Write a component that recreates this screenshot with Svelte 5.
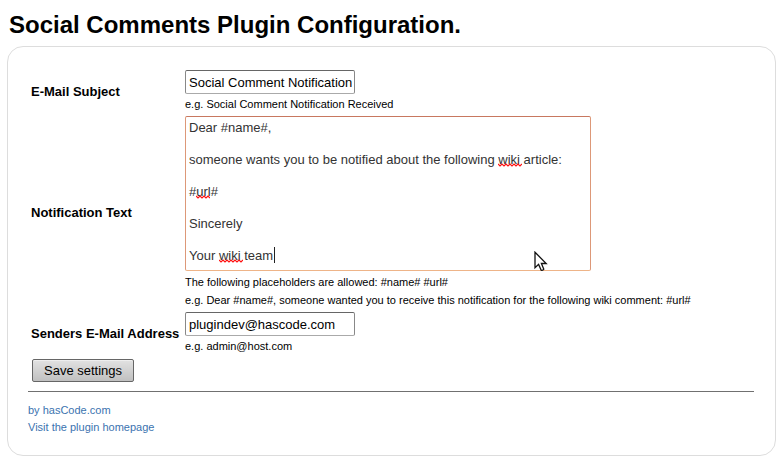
<script>
  let subject = $state('Social Comment Notification Received');
  let message = $state(
    'Dear #name#,\n\nsomeone wants you to be notified about the following wiki article:\n\n#url#\n\nSincerely\n\nYour wiki team'
  );
  let sender = $state('plugindev@hascode.com');

  // spelling marks over the message text: left, top, width
  const marks = [
    { x: 313, y: 47, w: 24 },
    { x: 11, y: 79, w: 14 },
    { x: 34, y: 143, w: 24 }
  ];

  function wave(w) {
    let d = 'M0 1';
    for (let x = 2, i = 0; x <= w; x += 2, i++) d += ` L${x} ${i % 2 ? 1 : 3}`;
    return d;
  }
</script>

<main>
  <h1>Social Comments Plugin Configuration.</h1>
  <section class="panel">
    <form onsubmit={(e) => e.preventDefault()}>
      <div class="fields">
        <label for="subject">E-Mail Subject</label>
        <div>
          <input id="subject" type="text" bind:value={subject} />
          <p class="hint">e.g. Social Comment Notification Received</p>
        </div>

        <label for="message">Notification Text</label>
        <div>
          <div class="editor">
            <textarea id="message" spellcheck="false" bind:value={message}></textarea>
            {#each marks as m}
              <svg class="mark" style="left:{m.x}px;top:{m.y}px" width={m.w} height="4" aria-hidden="true">
                <path d={wave(m.w)} fill="none" stroke="#ff1010" stroke-width="1.2" />
              </svg>
            {/each}
            <span class="caret"></span>
            <svg class="pointer" width="14" height="21" viewBox="0 0 14 21" aria-hidden="true">
              <path d="M1 1.2V16.8L4.6 13.4L7.2 19.2Q8.8 19.8 9.8 18.2L7.4 12.5H12.2Z" fill="#fff" stroke="#111" stroke-width="1.3" />
            </svg>
          </div>
          <p class="hint">The following placeholders are allowed: #name# #url#</p>
          <p class="hint">e.g. Dear #name#, someone wanted you to receive this notification for the following wiki comment: #url#</p>
        </div>

        <label for="sender">Senders E-Mail Address</label>
        <div>
          <input id="sender" type="text" bind:value={sender} />
          <p class="hint">e.g. admin@host.com</p>
        </div>
      </div>
      <button type="submit">Save settings</button>
    </form>
    <hr />
    <footer>
      <a href="#hascode">by hasCode.com</a>
      <a href="#homepage">Visit the plugin homepage</a>
    </footer>
  </section>
</main>

<style>
  :global(body) {
    margin: 0;
    background: #fff;
  }
  main {
    padding: 10px 7px;
    font-family: 'Liberation Sans', Arial, sans-serif;
    font-size: 13px;
    color: #000;
  }
  h1 {
    margin: 0 2px 6px;
    font-size: 24px;
    line-height: 30px;
  }
  .panel {
    border: 1px solid #ddd;
    border-radius: 16px;
    padding: 23px 21px 19px 20px;
  }
  .fields {
    display: grid;
    grid-template-columns: 151px minmax(0, 1fr);
    column-gap: 3px;
    row-gap: 3px;
    align-items: center;
    padding-left: 3px;
  }
  label {
    font-weight: bold;
    white-space: nowrap;
  }
  input,
  textarea {
    display: block;
    box-sizing: border-box;
    margin: 0;
    border: 1px solid #999;
    border-radius: 2px;
    background: #fff;
    font-family: inherit;
    font-size: 13px;
    outline: none;
  }
  input {
    width: 170px;
    height: 24px;
    margin-bottom: 1px;
    padding: 1px 2px 0 3px;
    border-color: #666 #888 #aaa;
    color: #000;
  }
  .editor {
    position: relative;
    max-width: 406px;
    margin-bottom: 2px;
  }
  textarea {
    width: 100%;
    height: 155px;
    padding: 3px;
    border-color: #c87860 #dd9878 #eeb488;
    line-height: 16px;
    color: #333;
    resize: none;
    overflow: hidden;
  }
  .mark,
  .caret,
  .pointer {
    position: absolute;
    pointer-events: none;
  }
  .caret {
    left: 89px;
    top: 131px;
    width: 1px;
    height: 16px;
    background: #222;
  }
  .pointer {
    left: 349px;
    top: 135px;
  }
  .hint {
    margin: 0;
    font-size: 11px;
    line-height: 18px;
  }
  button {
    display: block;
    height: 23px;
    margin: 4px 4px 0;
    padding: 0 11px;
    border: 1px solid #666;
    border-radius: 2px;
    background: linear-gradient(#e2e2e2, #c0c0c0);
    box-shadow: inset 0 1px #eee;
    font-family: inherit;
    font-size: 13px;
    color: #000;
  }
  hr {
    margin: 9px 0 10px;
    border: 0;
    border-top: 1px solid #707070;
  }
  footer {
    display: flex;
    flex-direction: column;
    align-items: flex-start;
    font-size: 11px;
    line-height: 17px;
  }
  a {
    color: #3b73af;
    text-decoration: none;
  }
</style>
